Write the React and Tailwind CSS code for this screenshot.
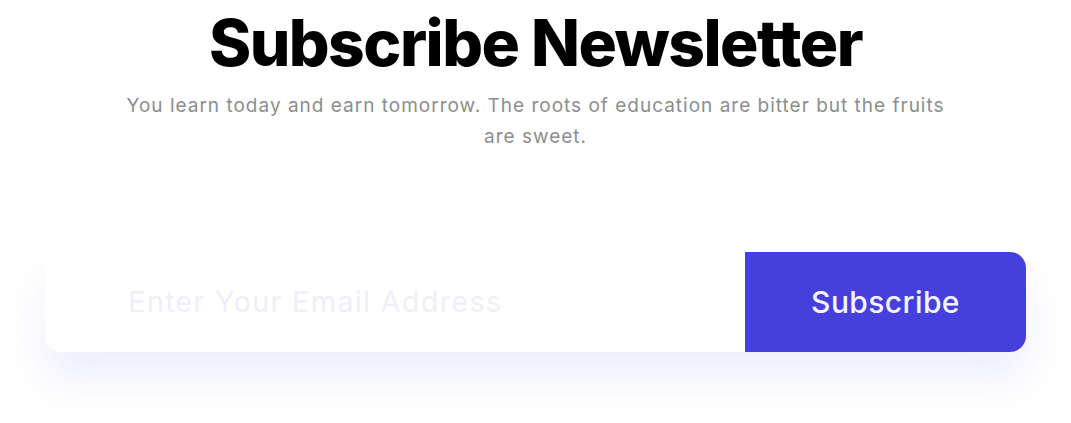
export default function App() {
  return (
    <div className="min-h-screen bg-white font-['Inter','Noto_Sans',sans-serif]">
      <section className="mx-auto w-[1071px] px-[45px] pt-[5px]">
        {/* Heading */}
        <div className="flex flex-col items-center text-center">
          <h2 className="text-[64px] font-extrabold leading-[76px] tracking-[-1.5px] text-black">
            Subscribe Newsletter
          </h2>
          <p className="mt-[9px] max-w-[840px] text-[19px] leading-[31px] tracking-[1px] text-[#8d8d8d]">
            You learn today and earn tomorrow. The roots of education are bitter but the fruits are sweet.
          </p>
        </div>

        {/* Form */}
        <form className="mt-[100px] flex h-[100px] rounded-[15px] bg-white shadow-[0_28px_40px_rgba(69,64,219,0.09)]">
          <input
            type="email"
            placeholder="Enter Your Email Address"
            className="min-w-0 flex-1 rounded-l-[15px] bg-transparent pl-[83px] text-[29px] tracking-[1.2px] text-gray-800 outline-none placeholder:text-[#efeefb]"
          />
          <button
            type="button"
            className="w-[281px] rounded-r-[16px] bg-[#4540db] text-[30px] font-medium tracking-[0.4px] text-[#f4f3ff]"
          >
            Subscribe
          </button>
        </form>
      </section>
    </div>
  );
}
